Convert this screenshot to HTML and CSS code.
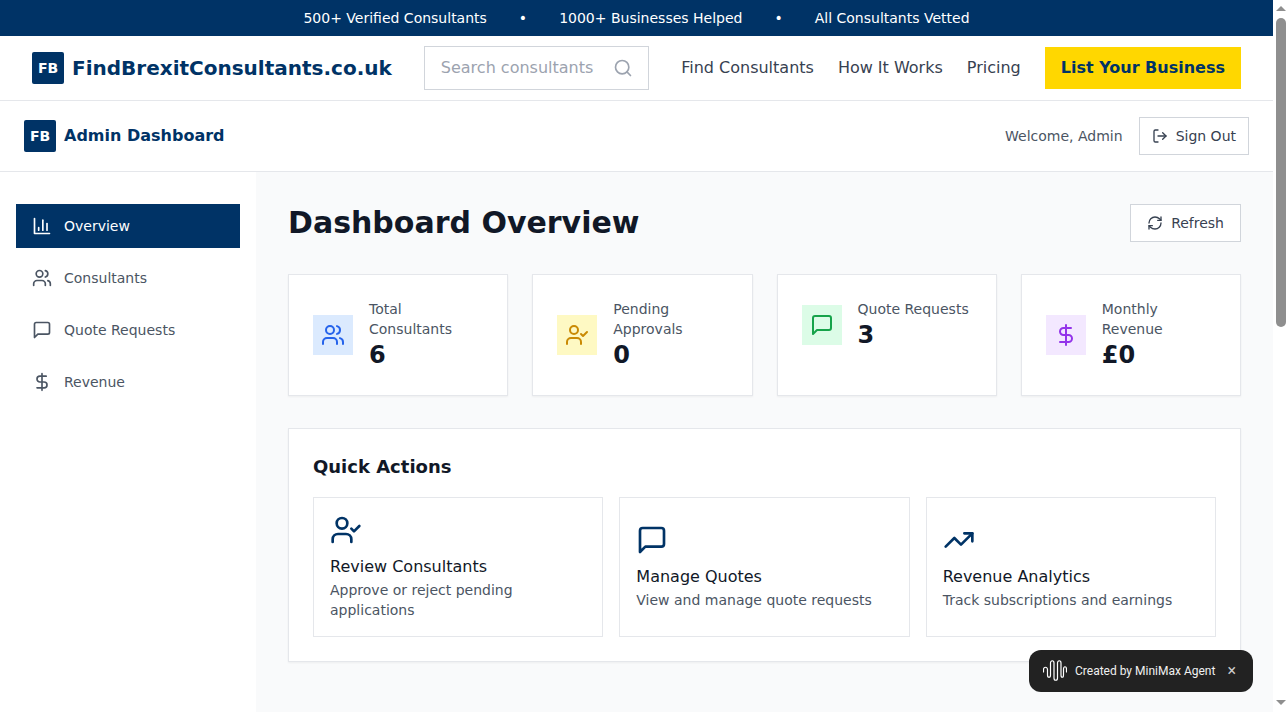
FILE: index.html
```html
<!DOCTYPE html>
<html lang="en">
<head>
<meta charset="utf-8">
<title>Admin Dashboard</title>
<link rel="stylesheet" href="styles.css">
</head>
<body>
<svg class="sprites" width="0" height="0" aria-hidden="true">
  <symbol id="i-users" viewBox="0 0 24 24"><path d="M16 21v-2a4 4 0 0 0-4-4H6a4 4 0 0 0-4 4v2"/><circle cx="9" cy="7" r="4"/><path d="M22 21v-2a4 4 0 0 0-3-3.87"/><path d="M16 3.13a4 4 0 0 1 0 7.75"/></symbol>
  <symbol id="i-usercheck" viewBox="0 0 24 24"><path d="M16 21v-2a4 4 0 0 0-4-4H6a4 4 0 0 0-4 4v2"/><circle cx="9" cy="7" r="4"/><polyline points="16 11 18 13 22 9"/></symbol>
  <symbol id="i-message" viewBox="0 0 24 24"><path d="M21 15a2 2 0 0 1-2 2H7l-4 4V5a2 2 0 0 1 2-2h14a2 2 0 0 1 2 2z"/></symbol>
  <symbol id="i-dollar" viewBox="0 0 24 24"><line x1="12" y1="2" x2="12" y2="22"/><path d="M17 5H9.5a3.5 3.5 0 0 0 0 7h5a3.5 3.5 0 0 1 0 7H6"/></symbol>
  <symbol id="i-chart" viewBox="0 0 24 24"><path d="M3 3v18h18"/><path d="M18 17V9"/><path d="M13 17V5"/><path d="M8 17v-3"/></symbol>
  <symbol id="i-logout" viewBox="0 0 24 24"><path d="M9 21H5a2 2 0 0 1-2-2V5a2 2 0 0 1 2-2h4"/><polyline points="16 17 21 12 16 7"/><line x1="21" y1="12" x2="9" y2="12"/></symbol>
  <symbol id="i-refresh" viewBox="0 0 24 24"><path d="M3 12a9 9 0 0 1 9-9 9.75 9.75 0 0 1 6.74 2.74L21 8"/><path d="M21 3v5h-5"/><path d="M21 12a9 9 0 0 1-9 9 9.75 9.75 0 0 1-6.74-2.74L3 16"/><path d="M8 16H3v5"/></symbol>
  <symbol id="i-trend" viewBox="0 0 24 24"><polyline points="22 7 13.5 15.5 8.5 10.5 2 17"/><polyline points="16 7 22 7 22 13"/></symbol>
  <symbol id="i-search" viewBox="0 0 24 24"><circle cx="11" cy="11" r="8"/><path d="m21 21-4.3-4.3"/></symbol>
</svg>

<div class="topbar">
  <span>500+ Verified Consultants</span>
  <span>•</span>
  <span>1000+ Businesses Helped</span>
  <span>•</span>
  <span>All Consultants Vetted</span>
</div>

<header class="site-header">
  <a class="brand" href="#">
    <span class="logo">FB</span>
    <span class="brand-name">FindBrexitConsultants.co.uk</span>
  </a>
  <div class="search">
    <span class="search-text">Search consultants</span>
    <svg class="icon search-icon"><use href="#i-search"/></svg>
  </div>
  <nav class="site-nav">
    <a href="#">Find Consultants</a>
    <a href="#">How It Works</a>
    <a href="#">Pricing</a>
    <a class="cta" href="#">List Your Business</a>
  </nav>
</header>

<div class="admin-header">
  <div class="admin-title">
    <span class="logo">FB</span>
    <span class="admin-name">Admin Dashboard</span>
  </div>
  <div class="admin-user">
    <span class="welcome">Welcome, Admin</span>
    <button class="btn" type="button"><svg class="icon icon-16"><use href="#i-logout"/></svg>Sign Out</button>
  </div>
</div>

<div class="layout">
  <aside class="sidebar">
    <a class="side-item active" href="#"><svg class="icon icon-20"><use href="#i-chart"/></svg>Overview</a>
    <a class="side-item" href="#"><svg class="icon icon-20"><use href="#i-users"/></svg>Consultants</a>
    <a class="side-item" href="#"><svg class="icon icon-20"><use href="#i-message"/></svg>Quote Requests</a>
    <a class="side-item" href="#"><svg class="icon icon-20"><use href="#i-dollar"/></svg>Revenue</a>
  </aside>

  <main class="main">
    <div class="page-head">
      <h1>Dashboard Overview</h1>
      <button class="btn btn-wide" type="button"><svg class="icon icon-16"><use href="#i-refresh"/></svg>Refresh</button>
    </div>

    <section class="stats">
      <div class="stat">
        <div class="stat-row">
          <span class="stat-icon blue"><svg class="icon icon-24"><use href="#i-users"/></svg></span>
          <div><p class="stat-label">Total Consultants</p><p class="stat-value">6</p></div>
        </div>
      </div>
      <div class="stat">
        <div class="stat-row">
          <span class="stat-icon yellow"><svg class="icon icon-24"><use href="#i-usercheck"/></svg></span>
          <div><p class="stat-label">Pending Approvals</p><p class="stat-value">0</p></div>
        </div>
      </div>
      <div class="stat">
        <div class="stat-row">
          <span class="stat-icon green"><svg class="icon icon-24"><use href="#i-message"/></svg></span>
          <div><p class="stat-label">Quote Requests</p><p class="stat-value">3</p></div>
        </div>
      </div>
      <div class="stat">
        <div class="stat-row">
          <span class="stat-icon purple"><svg class="icon icon-24"><use href="#i-dollar"/></svg></span>
          <div><p class="stat-label">Monthly Revenue</p><p class="stat-value">£0</p></div>
        </div>
      </div>
    </section>

    <section class="panel">
      <h2>Quick Actions</h2>
      <div class="actions">
        <a class="action" href="#">
          <svg class="icon icon-32"><use href="#i-usercheck"/></svg>
          <h3>Review Consultants</h3>
          <p>Approve or reject pending applications</p>
        </a>
        <a class="action" href="#">
          <svg class="icon icon-32"><use href="#i-message"/></svg>
          <h3>Manage Quotes</h3>
          <p>View and manage quote requests</p>
        </a>
        <a class="action" href="#">
          <svg class="icon icon-32"><use href="#i-trend"/></svg>
          <h3>Revenue Analytics</h3>
          <p>Track subscriptions and earnings</p>
        </a>
      </div>
    </section>
  </main>
</div>

<div class="badge">
  <svg class="wave" viewBox="0 0 24 21" width="24" height="21"><path d="M.5 12V9.500C.5 6.500 4.500 6.500 4.500 9.500V15C4.500 18 7.500 18 7.500 15V3C7.500 0 11 0 11 3V18C11 21 14.500 21 14.500 18V3C14.500 0 18 0 18 3V15C18 18 20.500 18 20.500 15V9C20.500 6 23.500 6 23.500 9V12"/></svg>
  <span class="badge-text">Created by MiniMax Agent</span>
  <span class="badge-close">×</span>
</div>

<div class="scrollbar" aria-hidden="true">
  <span class="arrow arrow-up"></span>
  <span class="thumb"></span>
  <span class="arrow arrow-down"></span>
</div>
</body>
</html>
```
FILE: styles.css
```css
* { box-sizing: border-box; }
html, body { margin: 0; padding: 0; }
body {
  font-family: "DejaVu Sans", sans-serif;
  font-size: 16px;
  line-height: 24px;
  color: #111827;
  background: #fff;
  min-height: 100vh;
  padding-right: 15px;
  display: flex;
  flex-direction: column;
}
a { color: inherit; text-decoration: none; }
h1, h2, h3, p { margin: 0; }
.sprites { position: absolute; }

.icon {
  display: block;
  flex: none;
  fill: none;
  stroke: currentColor;
  stroke-width: 2;
  stroke-linecap: round;
  stroke-linejoin: round;
}
.icon-16 { width: 16px; height: 16px; }
.icon-20 { width: 20px; height: 20px; }
.icon-24 { width: 24px; height: 24px; }
.icon-32 { width: 32px; height: 32px; color: #003366; }

.topbar {
  height: 36px;
  background: #003366;
  color: #fff;
  font-size: 14px;
  line-height: 20px;
  display: flex;
  justify-content: center;
  align-items: center;
  gap: 32px;
}

.site-header {
  height: 65px;
  padding: 0 32px;
  border-bottom: 1px solid #e5e7eb;
  display: flex;
  align-items: center;
  background: #fff;
}
.brand { display: flex; align-items: center; gap: 8px; }
.logo {
  width: 32px;
  height: 32px;
  border-radius: 2px;
  background: #003366;
  color: #fff;
  font-size: 14px;
  font-weight: 700;
  display: flex;
  align-items: center;
  justify-content: center;
}
.brand-name { font-size: 20px; line-height: 28px; font-weight: 700; color: #003366; }
.search {
  width: 225px;
  height: 44px;
  margin-left: 32px;
  padding: 0 16px;
  border: 1px solid #d1d5db;
  display: flex;
  align-items: center;
  justify-content: space-between;
}
.search-text { color: #9ca3af; }
.search-icon { width: 20px; height: 20px; color: #9ca3af; margin-right: -1px; }
.site-nav { margin-left: auto; display: flex; align-items: center; gap: 24px; color: #374151; }
.cta {
  height: 42px;
  padding: 0 16px;
  background: #ffd700;
  color: #003366;
  font-weight: 700;
  display: flex;
  align-items: center;
}

.admin-header {
  height: 71px;
  padding: 0 24px;
  border-bottom: 1px solid #e5e7eb;
  display: flex;
  align-items: center;
  justify-content: space-between;
}
.admin-title { display: flex; align-items: center; gap: 8px; }
.admin-name { font-weight: 700; color: #003366; }
.admin-user { display: flex; align-items: center; gap: 16px; }
.welcome { font-size: 14px; line-height: 20px; color: #4b5563; }
.btn {
  height: 38px;
  padding: 0 12px;
  border: 1px solid #d1d5db;
  background: #fff;
  color: #374151;
  font: inherit;
  font-size: 14px;
  line-height: 20px;
  display: flex;
  align-items: center;
  gap: 8px;
}
.btn-wide { padding: 0 16px; }

.layout { flex: 1; display: flex; }
.sidebar {
  width: 256px;
  flex: none;
  padding: 32px 16px;
  background: #fff;
  display: flex;
  flex-direction: column;
  gap: 8px;
}
.side-item {
  height: 44px;
  padding: 0 16px;
  display: flex;
  align-items: center;
  gap: 12px;
  font-size: 14px;
  line-height: 20px;
  color: #4b5563;
}
.side-item.active { background: #003366; color: #fff; }

.main { flex: 1; min-width: 0; padding: 32px; background: #f9fafb; }
.page-head {
  display: flex;
  align-items: center;
  justify-content: space-between;
  margin-bottom: 32px;
}
h1 { font-size: 30px; line-height: 36px; font-weight: 700; }

.stats {
  display: grid;
  grid-template-columns: repeat(4, 1fr);
  gap: 24px;
  margin-bottom: 32px;
}
.stat {
  padding: 24px;
  background: #fff;
  border: 1px solid #e5e7eb;
  box-shadow: 0 1px 2px rgba(0, 0, 0, 0.05);
}
.stat-row { display: flex; align-items: center; gap: 16px; }
.stat-icon {
  width: 40px;
  height: 40px;
  flex: none;
  display: flex;
  align-items: center;
  justify-content: center;
}
.blue { background: #dbeafe; color: #2563eb; }
.yellow { background: #fef9c3; color: #ca8a04; }
.green { background: #dcfce7; color: #16a34a; }
.purple { background: #f3e8ff; color: #9333ea; }
.stat-label { font-size: 14px; line-height: 20px; color: #4b5563; }
.stat-value { font-size: 24px; line-height: 32px; font-weight: 700; }

.panel {
  padding: 24px;
  background: #fff;
  border: 1px solid #e5e7eb;
  box-shadow: 0 1px 2px rgba(0, 0, 0, 0.05);
}
h2 { font-size: 18px; line-height: 28px; font-weight: 700; margin-bottom: 16px; }
.actions { display: grid; grid-template-columns: repeat(3, 1fr); gap: 16px; }
.action {
  padding: 16px;
  border: 1px solid #e5e7eb;
  display: flex;
  flex-direction: column;
  justify-content: center;
}
.action h3 { font-size: 16px; line-height: 24px; font-weight: 400; margin-top: 9px; margin-bottom: 1px; }
.action p { font-size: 14px; line-height: 20px; color: #4b5563; }

.badge {
  position: fixed;
  right: 35px;
  bottom: 20px;
  width: 224px;
  height: 42px;
  padding: 0 14px 1px;
  border-radius: 12px;
  background: #222;
  color: #fff;
  font-family: Roboto, sans-serif;
  font-size: 12px;
  line-height: 16px;
  display: flex;
  align-items: center;
}
.wave { flex: none; fill: none; stroke: #fff; stroke-width: 1.2; stroke-linecap: round; }
.badge-text { margin-left: 8px; color: #f0f0f0; }
.badge-close { margin-left: auto; font-size: 16px; color: #ccc; margin-right: 3px; }

.scrollbar {
  position: fixed;
  top: 0;
  right: 0;
  bottom: 0;
  width: 15px;
  background: #fff;
}
.thumb {
  position: absolute;
  top: 18px;
  left: 3px;
  width: 10px;
  height: 309px;
  border-radius: 5px;
  background: #8f8f8f;
}
.arrow {
  position: absolute;
  left: 3px;
  width: 0;
  height: 0;
  border-left: 5px solid transparent;
  border-right: 5px solid transparent;
}
.arrow-up { top: 6px; border-bottom: 5px solid #8f8f8f; }
.arrow-down { bottom: 7px; border-top: 5px solid #8f8f8f; }
```
